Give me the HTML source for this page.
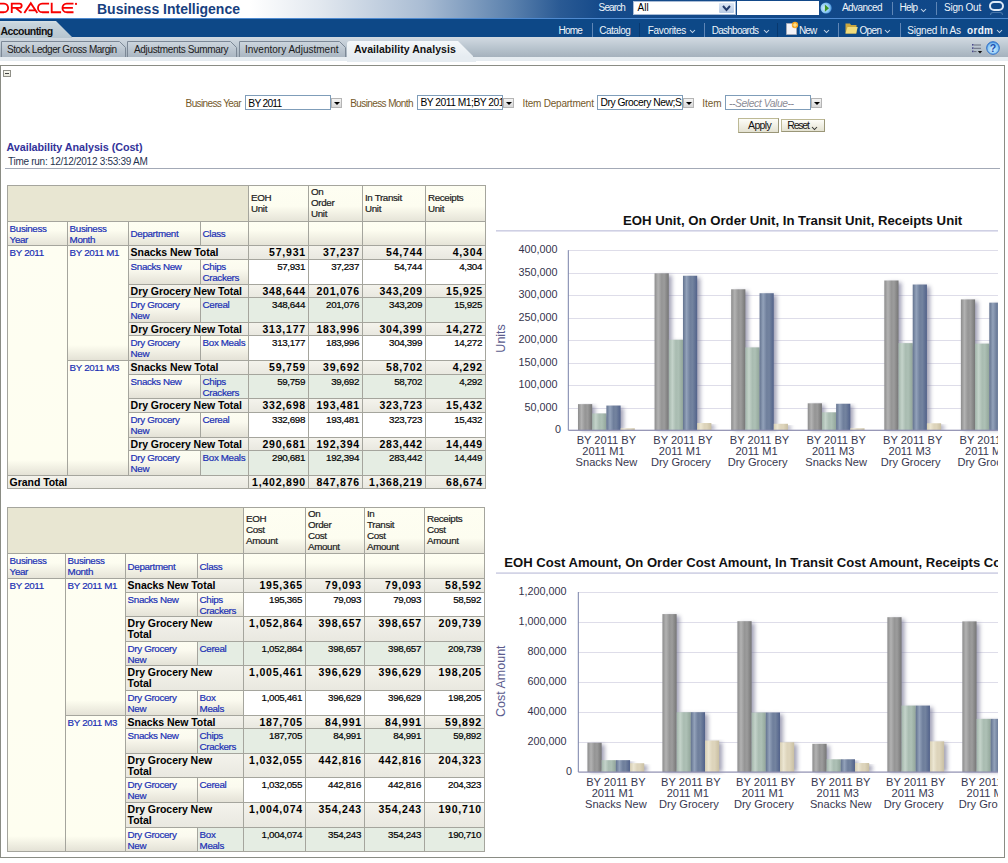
<!DOCTYPE html><html><head><meta charset="utf-8"><title>Availability Analysis</title><style>
*{box-sizing:border-box}
html,body{margin:0;padding:0}
body{width:1008px;height:863px;overflow:hidden;position:relative;background:#fff;font-family:"Liberation Sans",sans-serif;}
.a{position:absolute}
.nw{white-space:nowrap}
#top{left:0;top:0;width:1008px;height:18px;background:linear-gradient(90deg,#ffffff 0px,#ffffff 250px,#e2e8ef 320px,#a9bcd3 424px,#5c82ae 510px,#2a5a94 560px,#154a8a 600px,#0f4788 1008px)}
#blueline{left:0;top:18px;width:1008px;height:1px;background:#4f8ad0}
#nav{left:0;top:19px;width:1008px;height:18px;background:#0d4887}
#tabbar{left:0;top:37px;width:1008px;height:20px;background:linear-gradient(#d2dae2,#b6c2cc 60%,#a5b1bd)}
#strip{left:0;top:57px;width:1008px;height:4px;background:#e6ecf1}
.sep{width:1px;background:#5f86b6}
#content{left:0;top:65px;width:1005px;height:793px;border:1px solid #8a8c84}
.inp{background:#fff;border:1px solid #7f9db9;overflow:hidden;white-space:nowrap}
.dd{background:linear-gradient(#f4f4f4,#d8d8d8);border:1px solid #b5b5b5}
.dd:after{content:"";position:absolute;left:2px;top:3px;border-left:3px solid transparent;border-right:3px solid transparent;border-top:3px solid #000}
.btn{border:1px solid #bdb995;border-right-color:#9a9678;border-bottom-color:#9a9678;background:linear-gradient(#fdfdf8,#e4e2d2)}
.tb{background:#a5a59d}
.c{position:absolute;overflow:hidden;font-size:9.8px;line-height:11px;letter-spacing:-0.35px;white-space:nowrap;-webkit-text-stroke:0.2px currentColor}
.tt,.nt{-webkit-text-stroke:0}
.hb{background:#e8e6d2}
.hc{background:linear-gradient(#fefef2 0,#fdfdf0 calc(100% - 15px),#e6e4d8 100%);color:#1c1c1c;padding:0 2px;display:flex;align-items:center}
.hl{background:linear-gradient(#fefef2 0,#fdfdf0 calc(100% - 15px),#e6e4d8 100%);color:#1a30b4;padding:0 1px 0 1.6px;display:flex;align-items:center}
.rl{background:linear-gradient(#fefef2 0,#fefef0 calc(100% - 15px),#e4e2d6 100%);color:#1a30b4;padding:1px 1px 0 1.6px}
.tt{background:linear-gradient(#f4f3ec,#e9e8e0);color:#000;font-weight:bold;font-size:10.5px;letter-spacing:-0.05px;padding:1px 1px 0 1.6px}
.dl{background:linear-gradient(#fdfdf1 0,#fbfaef calc(100% - 15px),#e4e2d7 100%);color:#1a30b4;padding:1px 1px 0 1.6px}
.dg{background:#e5ede3;color:#1a30b4;padding:1px 1px 0 1.6px}
.nt{background:linear-gradient(#f4f3ec,#e9e8e0);color:#000;font-weight:bold;font-size:10.5px;letter-spacing:0.8px;text-align:right;padding:1px 2px 0}
.nd{background:#fff;color:#000;text-align:right;padding:1px 3px 0}
.ng{background:#e5ede3;color:#000;text-align:right;padding:1px 3px 0}
</style></head><body>
<div id="top" class="a"></div><div id="blueline" class="a"></div><div id="nav" class="a"></div>
<svg class="a" style="left:0;top:0" width="80" height="16"><g fill="none" stroke="#f80000" stroke-width="1.85"><path d="M-6 3.55H4A4.33 4.33 0 0 1 4 12.2H-6"/><path d="M11.75 13V3.55H19.5A2.17 2.17 0 0 1 19.5 7.9H11.75M15.6 7.9L21.6 12.7"/><path d="M24.3 13L30.8 3.2L37.3 13M28.6 10.3H35.6"/><path d="M49.1 3.55H42.1A4.33 4.33 0 0 0 42.1 12.2H49.1"/><path d="M51.7 2.75V12.2H61.1"/><path d="M73.5 3.55H66.6A4.33 4.33 0 0 0 66.6 12.2H73.5M62.6 7.9H72.9"/></g><circle cx="76" cy="3.9" r="1.1" fill="#f80000"/></svg>
<div class="a nw" style="left:97px;top:0.67px;font-size:14px;line-height:17px;font-weight:bold;font-style:normal;color:#183f80;letter-spacing:-0.009px;">Business Intelligence</div>
<div class="a nw" style="left:598.6px;top:1.70px;font-size:10px;line-height:12px;font-weight:normal;font-style:normal;color:#eef4fa;letter-spacing:-0.877px;">Search</div>
<div class="a" style="left:633px;top:1px;width:103px;height:14px;background:#fff;border:1px solid #a9bcd6"></div>
<div class="a nw" style="left:637.5px;top:1.70px;font-size:10px;line-height:12px;font-weight:normal;font-style:normal;color:#000;">All</div>
<div class="a" style="left:719px;top:3px;width:15px;height:10px;background:linear-gradient(#dde7f5,#b8cbe6);border-radius:1px"></div>
<svg class="a" style="left:722px;top:5px" width="9" height="7"><path d="M1 1 L4.5 5 L8 1" stroke="#243c6c" stroke-width="2" fill="none"/></svg>
<div class="a" style="left:737px;top:1px;width:82px;height:14px;background:#fff"></div>
<svg class="a" style="left:820px;top:2px" width="13" height="13"><defs><radialGradient id="gog" cx="0.4" cy="0.5" r="0.6"><stop offset="0" stop-color="#e0f4ff"/><stop offset="0.65" stop-color="#8fcaf5"/><stop offset="1" stop-color="#3f8ad6"/></radialGradient></defs><circle cx="6.1" cy="6" r="5.6" fill="url(#gog)"/><path d="M4.9 2.4 L9 6.2 L4.9 9.8Z" fill="#3d9628"/></svg>
<div class="a nw" style="left:842px;top:1.70px;font-size:10px;line-height:12px;font-weight:normal;font-style:normal;color:#eef4fa;letter-spacing:-0.555px;">Advanced</div>
<div class="a sep" style="left:892px;top:2px;height:13px"></div>
<div class="a nw" style="left:899.5px;top:1.70px;font-size:10px;line-height:12px;font-weight:normal;font-style:normal;color:#eef4fa;letter-spacing:-0.693px;">Help</div>
<svg class="a" style="left:920px;top:8px" width="7" height="5"><path d="M1 1 L3.5 3.5 L6 1" stroke="#c9d8ea" stroke-width="1.05" fill="none"/></svg>
<div class="a sep" style="left:936px;top:2px;height:13px"></div>
<div class="a nw" style="left:944px;top:1.70px;font-size:10px;line-height:12px;font-weight:normal;font-style:normal;color:#eef4fa;letter-spacing:-0.246px;">Sign Out</div>
<div class="a" style="left:989px;top:1px;width:15px;height:10px;border:2px solid #dde9f7;border-radius:5px"></div>
<div class="a" style="left:990px;top:12px;width:13px;height:3px;border:1.5px solid rgba(200,220,245,0.3);border-bottom:0;border-radius:5px 5px 0 0"></div>
<div class="a nw" style="left:558.5px;top:24.99px;font-size:10px;line-height:12px;font-weight:normal;font-style:normal;color:#eef4fa;letter-spacing:-0.812px;">Home</div>
<div class="a sep" style="left:592px;top:23px;height:14px"></div>
<div class="a" style="left:639px;top:23px;width:1px;height:14px;background:#08386e"></div>
<div class="a" style="left:777px;top:23px;width:1px;height:14px;background:#08386e"></div>
<div class="a nw" style="left:599.2px;top:24.99px;font-size:10px;line-height:12px;font-weight:normal;font-style:normal;color:#eef4fa;letter-spacing:-0.461px;">Catalog</div>
<div class="a nw" style="left:647.7px;top:24.99px;font-size:10px;line-height:12px;font-weight:normal;font-style:normal;color:#eef4fa;letter-spacing:-0.316px;">Favorites</div>
<svg class="a" style="left:689px;top:29px" width="7" height="5"><path d="M1 1 L3.5 3.5 L6 1" stroke="#c9d8ea" stroke-width="1.05" fill="none"/></svg>
<div class="a sep" style="left:704px;top:23px;height:14px"></div>
<div class="a nw" style="left:711.7px;top:24.99px;font-size:10px;line-height:12px;font-weight:normal;font-style:normal;color:#eef4fa;letter-spacing:-0.736px;">Dashboards</div>
<svg class="a" style="left:763px;top:29px" width="7" height="5"><path d="M1 1 L3.5 3.5 L6 1" stroke="#c9d8ea" stroke-width="1.05" fill="none"/></svg>
<svg class="a" style="left:785px;top:21px" width="14" height="15"><path d="M1.5 2.5 H8 L11.5 6 V13.5 H1.5Z" fill="#f4f4f8" stroke="#a0a8b8" stroke-width="1"/><circle cx="10" cy="4" r="3.2" fill="#f5a623"/><path d="M10 1.8V6.2M7.8 4H12.2" stroke="#fff2b0" stroke-width="1"/></svg>
<div class="a nw" style="left:799px;top:24.99px;font-size:10px;line-height:12px;font-weight:normal;font-style:normal;color:#eef4fa;letter-spacing:-0.883px;">New</div>
<svg class="a" style="left:823px;top:29px" width="7" height="5"><path d="M1 1 L3.5 3.5 L6 1" stroke="#c9d8ea" stroke-width="1.05" fill="none"/></svg>
<div class="a sep" style="left:838px;top:23px;height:14px"></div>
<svg class="a" style="left:845px;top:23px" width="13" height="11"><path d="M0.5 0.5 H5 L6 2 H11.5 V10.5 H0.5Z" fill="#c9a640"/><path d="M0.5 10.5 L2.5 4 H12.8 L11 10.5Z" fill="#f1dc7c"/></svg>
<div class="a nw" style="left:859.4px;top:24.99px;font-size:10px;line-height:12px;font-weight:normal;font-style:normal;color:#eef4fa;letter-spacing:-0.623px;">Open</div>
<svg class="a" style="left:884px;top:29px" width="7" height="5"><path d="M1 1 L3.5 3.5 L6 1" stroke="#c9d8ea" stroke-width="1.05" fill="none"/></svg>
<div class="a sep" style="left:900px;top:23px;height:14px"></div>
<div class="a nw" style="left:907.3px;top:24.99px;font-size:10px;line-height:12px;font-weight:normal;font-style:normal;color:#eef4fa;letter-spacing:-0.223px;">Signed In As</div>
<div class="a nw" style="left:967px;top:24.99px;font-size:10px;line-height:12px;font-weight:bold;font-style:normal;color:#eef4fa;letter-spacing:0.333px;">ordm</div>
<svg class="a" style="left:996px;top:29px" width="7" height="5"><path d="M1 1 L3.5 3.5 L6 1" stroke="#c9d8ea" stroke-width="1.05" fill="none"/></svg>
<div id="tabbar" class="a"></div><div id="strip" class="a"></div>
<svg class="a" style="left:0;top:21px" width="80" height="17"><defs><linearGradient id="acg" x1="0" y1="0" x2="0" y2="1"><stop offset="0" stop-color="#d6e0e6"/><stop offset="0.15" stop-color="#c8d5dd"/><stop offset="1" stop-color="#b6c5d0"/></linearGradient></defs><path d="M0 0 H56 L72 16 V17 H0Z" fill="url(#acg)"/></svg>
<div class="a nw" style="left:0.5px;top:25.03px;font-size:10.5px;line-height:13px;font-weight:bold;font-style:normal;color:#111;letter-spacing:-0.556px;">Accounting</div>
<svg class="a" style="left:1px;top:41px" width="126" height="16"><defs><linearGradient id="stg1" x1="0" y1="0" x2="0" y2="1"><stop offset="0" stop-color="#cdd6de"/><stop offset="1" stop-color="#aab6c2"/></linearGradient></defs><path d="M0.5 16 V0.5 H118.5 L124.5 6.5 V16" fill="url(#stg1)" stroke="#7c8896" stroke-width="1"/></svg>
<div class="a nw" style="left:7px;top:43.70px;font-size:10px;line-height:12px;font-weight:normal;font-style:normal;color:#1a1a1a;letter-spacing:-0.488px;">Stock Ledger Gross Margin</div>
<svg class="a" style="left:127px;top:41px" width="111" height="16"><defs><linearGradient id="stg127" x1="0" y1="0" x2="0" y2="1"><stop offset="0" stop-color="#cdd6de"/><stop offset="1" stop-color="#aab6c2"/></linearGradient></defs><path d="M0.5 16 V0.5 H103.5 L109.5 6.5 V16" fill="url(#stg127)" stroke="#7c8896" stroke-width="1"/></svg>
<div class="a nw" style="left:134px;top:43.70px;font-size:10px;line-height:12px;font-weight:normal;font-style:normal;color:#1a1a1a;letter-spacing:-0.339px;">Adjustments Summary</div>
<svg class="a" style="left:239px;top:41px" width="108" height="16"><defs><linearGradient id="stg239" x1="0" y1="0" x2="0" y2="1"><stop offset="0" stop-color="#cdd6de"/><stop offset="1" stop-color="#aab6c2"/></linearGradient></defs><path d="M0.5 16 V0.5 H100.5 L106.5 6.5 V16" fill="url(#stg239)" stroke="#7c8896" stroke-width="1"/></svg>
<div class="a nw" style="left:245px;top:43.70px;font-size:10px;line-height:12px;font-weight:normal;font-style:normal;color:#1a1a1a;letter-spacing:0.006px;">Inventory Adjustment</div>
<svg class="a" style="left:347px;top:41px" width="129" height="21"><defs><linearGradient id="atg" x1="0" y1="0" x2="0" y2="1"><stop offset="0" stop-color="#f5f8fa"/><stop offset="0.75" stop-color="#e6ecf1"/><stop offset="1" stop-color="#e6ecf1"/></linearGradient></defs><path d="M0 21 V3 Q0 0 3 0 H111 L126 15 V16 H129 V21Z" fill="url(#atg)"/></svg>
<div class="a nw" style="left:354px;top:43.03px;font-size:10.5px;line-height:13px;font-weight:bold;font-style:normal;color:#111;letter-spacing:0.049px;">Availability Analysis</div>
<svg class="a" style="left:970px;top:42px" width="14" height="13"><g fill="#4a4a8a"><rect x="2" y="2" width="1.6" height="1.6"/><rect x="2" y="5.3" width="1.6" height="1.6"/><rect x="2" y="8.6" width="1.6" height="1.6"/></g><g stroke="#6a7080" stroke-width="1"><path d="M4 3H11M4 6.3H11M4 9.6H6.5"/></g><path d="M7.8 9 H12.2 L10 11.6Z" fill="#111"/></svg>
<svg class="a" style="left:986px;top:41px" width="15" height="15"><defs><radialGradient id="hg" cx="0.5" cy="0.6" r="0.6"><stop offset="0" stop-color="#d8f0ff"/><stop offset="0.7" stop-color="#8cc8f4"/><stop offset="1" stop-color="#3a86d8"/></radialGradient></defs><circle cx="7" cy="7" r="6.3" fill="url(#hg)" stroke="#2a6cc8" stroke-width="1"/><text x="7" y="11" font-size="10.5" font-weight="bold" text-anchor="middle" fill="#1c4fb0" font-family="Liberation Sans">?</text></svg>
<div id="content" class="a"></div>
<div class="a" style="left:3px;top:70px;width:8px;height:7px;border:1px solid #909088;background:linear-gradient(#fafaf0,#e8e8dc)"><div class="a" style="left:1px;top:2px;width:4px;height:1px;background:#444"></div></div>
<div class="a nw" style="left:185.6px;top:98.00px;font-size:10px;line-height:12px;font-weight:normal;font-style:normal;color:#75592a;letter-spacing:-0.616px;">Business Year</div>
<div class="a inp" style="left:245px;top:95px;width:86px;height:15px"></div>
<div class="a nw" style="left:248.3px;top:97.90px;font-size:10.3px;line-height:12px;font-weight:normal;font-style:normal;color:#000;letter-spacing:-0.760px;">BY 2011</div>
<div class="a dd" style="left:331px;top:98px;width:11px;height:10px"></div>
<div class="a nw" style="left:350.3px;top:98.00px;font-size:10px;line-height:12px;font-weight:normal;font-style:normal;color:#75592a;letter-spacing:-0.612px;">Business Month</div>
<div class="a inp" style="left:417px;top:95px;width:86px;height:15px"></div>
<div class="a" style="left:418px;top:96px;width:84px;height:13px;overflow:hidden"><div class="a nw" style="left:2.5px;top:1.10px;font-size:10.3px;line-height:12px;font-weight:normal;font-style:normal;color:#000;letter-spacing:-0.515px;">BY 2011 M1;BY 2011 M3</div></div>
<div class="a dd" style="left:503px;top:98px;width:11px;height:10px"></div>
<div class="a nw" style="left:522.6px;top:98.00px;font-size:10px;line-height:12px;font-weight:normal;font-style:normal;color:#75592a;letter-spacing:-0.220px;">Item Department</div>
<div class="a inp" style="left:597px;top:95px;width:86px;height:15px"></div>
<div class="a" style="left:598px;top:96px;width:84px;height:13px;overflow:hidden"><div class="a nw" style="left:2.5px;top:1.10px;font-size:10.3px;line-height:12px;font-weight:normal;font-style:normal;color:#000;letter-spacing:-0.457px;">Dry Grocery New;Snacks</div></div>
<div class="a dd" style="left:683px;top:98px;width:11px;height:10px"></div>
<div class="a nw" style="left:702.2px;top:98.00px;font-size:10px;line-height:12px;font-weight:normal;font-style:normal;color:#75592a;letter-spacing:-0.051px;">Item</div>
<div class="a inp" style="left:725px;top:95px;width:86px;height:15px"></div>
<div class="a nw" style="left:729px;top:97.90px;font-size:10.3px;line-height:12px;font-weight:normal;font-style:italic;color:#8c8c96;letter-spacing:-0.410px;">--Select Value--</div>
<div class="a dd" style="left:811px;top:98px;width:11px;height:10px"></div>
<div class="a btn" style="left:738px;top:118px;width:41px;height:15px"></div>
<div class="a nw" style="left:748px;top:119.03px;font-size:10.5px;line-height:13px;font-weight:normal;font-style:normal;color:#111;letter-spacing:-0.616px;">Apply</div>
<div class="a btn" style="left:781px;top:119px;width:44px;height:13px"></div>
<div class="a nw" style="left:787.3px;top:119.03px;font-size:10.5px;line-height:13px;font-weight:normal;font-style:normal;color:#111;letter-spacing:-1.209px;">Reset</div>
<svg class="a" style="left:811px;top:126px" width="7" height="5"><path d="M1 1 L3.5 3.5 L6 1" stroke="#333" stroke-width="1.05" fill="none"/></svg>
<div class="a nw" style="left:6.5px;top:140.93px;font-size:10.8px;line-height:13px;font-weight:bold;font-style:normal;color:#33339a;letter-spacing:-0.067px;">Availability Analysis (Cost)</div>
<div class="a nw" style="left:8px;top:155.50px;font-size:10px;line-height:12px;font-weight:normal;font-style:normal;color:#1f3350;letter-spacing:-0.275px;">Time run: 12/12/2012 3:53:39 AM</div>
<div class="a" style="left:5px;top:168px;width:995px;height:1px;background:#a3a9b6"></div>
<div class="a tb" style="left:7px;top:185px;width:479px;height:304px">
<div class="c hb" style="left:1px;top:1px;width:240px;height:35px;"></div>
<div class="c hc" style="left:242px;top:1px;width:59px;height:35px;padding-bottom:2px">EOH<br>Unit</div>
<div class="c hc" style="left:302px;top:1px;width:53px;height:35px;padding-bottom:2px">On<br>Order<br>Unit</div>
<div class="c hc" style="left:356px;top:1px;width:62px;height:35px;padding-bottom:2px">In Transit<br>Unit</div>
<div class="c hc" style="left:419px;top:1px;width:59px;height:35px;padding-bottom:2px">Receipts<br>Unit</div>
<div class="c hl" style="left:1px;top:37px;width:59px;height:23px;">Business<br>Year</div>
<div class="c hl" style="left:61px;top:37px;width:60px;height:23px;">Business<br>Month</div>
<div class="c hl" style="left:122px;top:37px;width:71px;height:23px;">Department</div>
<div class="c hl" style="left:194px;top:37px;width:47px;height:23px;">Class</div>
<div class="c hc" style="left:242px;top:37px;width:59px;height:23px;"></div>
<div class="c hc" style="left:302px;top:37px;width:53px;height:23px;"></div>
<div class="c hc" style="left:356px;top:37px;width:62px;height:23px;"></div>
<div class="c hc" style="left:419px;top:37px;width:59px;height:23px;"></div>
<div class="c rl" style="left:1px;top:61px;width:59px;height:229px;">BY 2011</div>
<div class="c rl" style="left:61px;top:61px;width:60px;height:114px;">BY 2011 M1</div>
<div class="c rl" style="left:61px;top:176px;width:60px;height:114px;">BY 2011 M3</div>
<div class="c tt" style="left:122px;top:61px;width:119px;height:13px;">Snacks New Total</div>
<div class="c nt" style="left:242px;top:61px;width:59px;height:13px;">57,931</div>
<div class="c nt" style="left:302px;top:61px;width:53px;height:13px;">37,237</div>
<div class="c nt" style="left:356px;top:61px;width:62px;height:13px;">54,744</div>
<div class="c nt" style="left:419px;top:61px;width:59px;height:13px;">4,304</div>
<div class="c dl" style="left:122px;top:75px;width:71px;height:24px;">Snacks New</div>
<div class="c dl" style="left:194px;top:75px;width:47px;height:24px;">Chips<br>Crackers</div>
<div class="c nd" style="left:242px;top:75px;width:59px;height:24px;">57,931</div>
<div class="c nd" style="left:302px;top:75px;width:53px;height:24px;">37,237</div>
<div class="c nd" style="left:356px;top:75px;width:62px;height:24px;">54,744</div>
<div class="c nd" style="left:419px;top:75px;width:59px;height:24px;">4,304</div>
<div class="c tt" style="left:122px;top:100px;width:119px;height:12px;">Dry Grocery New Total</div>
<div class="c nt" style="left:242px;top:100px;width:59px;height:12px;">348,644</div>
<div class="c nt" style="left:302px;top:100px;width:53px;height:12px;">201,076</div>
<div class="c nt" style="left:356px;top:100px;width:62px;height:12px;">343,209</div>
<div class="c nt" style="left:419px;top:100px;width:59px;height:12px;">15,925</div>
<div class="c dl" style="left:122px;top:113px;width:71px;height:24px;">Dry Grocery<br>New</div>
<div class="c dg" style="left:194px;top:113px;width:47px;height:24px;">Cereal</div>
<div class="c ng" style="left:242px;top:113px;width:59px;height:24px;">348,644</div>
<div class="c ng" style="left:302px;top:113px;width:53px;height:24px;">201,076</div>
<div class="c ng" style="left:356px;top:113px;width:62px;height:24px;">343,209</div>
<div class="c ng" style="left:419px;top:113px;width:59px;height:24px;">15,925</div>
<div class="c tt" style="left:122px;top:138px;width:119px;height:12px;">Dry Grocery New Total</div>
<div class="c nt" style="left:242px;top:138px;width:59px;height:12px;">313,177</div>
<div class="c nt" style="left:302px;top:138px;width:53px;height:12px;">183,996</div>
<div class="c nt" style="left:356px;top:138px;width:62px;height:12px;">304,399</div>
<div class="c nt" style="left:419px;top:138px;width:59px;height:12px;">14,272</div>
<div class="c dl" style="left:122px;top:151px;width:71px;height:24px;">Dry Grocery<br>New</div>
<div class="c dl" style="left:194px;top:151px;width:47px;height:24px;">Box Meals</div>
<div class="c nd" style="left:242px;top:151px;width:59px;height:24px;">313,177</div>
<div class="c nd" style="left:302px;top:151px;width:53px;height:24px;">183,996</div>
<div class="c nd" style="left:356px;top:151px;width:62px;height:24px;">304,399</div>
<div class="c nd" style="left:419px;top:151px;width:59px;height:24px;">14,272</div>
<div class="c tt" style="left:122px;top:176px;width:119px;height:13px;">Snacks New Total</div>
<div class="c nt" style="left:242px;top:176px;width:59px;height:13px;">59,759</div>
<div class="c nt" style="left:302px;top:176px;width:53px;height:13px;">39,692</div>
<div class="c nt" style="left:356px;top:176px;width:62px;height:13px;">58,702</div>
<div class="c nt" style="left:419px;top:176px;width:59px;height:13px;">4,292</div>
<div class="c dl" style="left:122px;top:190px;width:71px;height:23px;">Snacks New</div>
<div class="c dg" style="left:194px;top:190px;width:47px;height:23px;">Chips<br>Crackers</div>
<div class="c ng" style="left:242px;top:190px;width:59px;height:23px;">59,759</div>
<div class="c ng" style="left:302px;top:190px;width:53px;height:23px;">39,692</div>
<div class="c ng" style="left:356px;top:190px;width:62px;height:23px;">58,702</div>
<div class="c ng" style="left:419px;top:190px;width:59px;height:23px;">4,292</div>
<div class="c tt" style="left:122px;top:214px;width:119px;height:13px;">Dry Grocery New Total</div>
<div class="c nt" style="left:242px;top:214px;width:59px;height:13px;">332,698</div>
<div class="c nt" style="left:302px;top:214px;width:53px;height:13px;">193,481</div>
<div class="c nt" style="left:356px;top:214px;width:62px;height:13px;">323,723</div>
<div class="c nt" style="left:419px;top:214px;width:59px;height:13px;">15,432</div>
<div class="c dl" style="left:122px;top:228px;width:71px;height:24px;">Dry Grocery<br>New</div>
<div class="c dl" style="left:194px;top:228px;width:47px;height:24px;">Cereal</div>
<div class="c nd" style="left:242px;top:228px;width:59px;height:24px;">332,698</div>
<div class="c nd" style="left:302px;top:228px;width:53px;height:24px;">193,481</div>
<div class="c nd" style="left:356px;top:228px;width:62px;height:24px;">323,723</div>
<div class="c nd" style="left:419px;top:228px;width:59px;height:24px;">15,432</div>
<div class="c tt" style="left:122px;top:253px;width:119px;height:12px;">Dry Grocery New Total</div>
<div class="c nt" style="left:242px;top:253px;width:59px;height:12px;">290,681</div>
<div class="c nt" style="left:302px;top:253px;width:53px;height:12px;">192,394</div>
<div class="c nt" style="left:356px;top:253px;width:62px;height:12px;">283,442</div>
<div class="c nt" style="left:419px;top:253px;width:59px;height:12px;">14,449</div>
<div class="c dl" style="left:122px;top:266px;width:71px;height:24px;">Dry Grocery<br>New</div>
<div class="c dg" style="left:194px;top:266px;width:47px;height:24px;">Box Meals</div>
<div class="c ng" style="left:242px;top:266px;width:59px;height:24px;">290,681</div>
<div class="c ng" style="left:302px;top:266px;width:53px;height:24px;">192,394</div>
<div class="c ng" style="left:356px;top:266px;width:62px;height:24px;">283,442</div>
<div class="c ng" style="left:419px;top:266px;width:59px;height:24px;">14,449</div>
<div class="c tt" style="left:1px;top:291px;width:240px;height:12px;">Grand Total</div>
<div class="c nt" style="left:242px;top:291px;width:59px;height:12px;">1,402,890</div>
<div class="c nt" style="left:302px;top:291px;width:53px;height:12px;">847,876</div>
<div class="c nt" style="left:356px;top:291px;width:62px;height:12px;">1,368,219</div>
<div class="c nt" style="left:419px;top:291px;width:59px;height:12px;">68,674</div>
</div>
<div class="a tb" style="left:7px;top:507px;width:478px;height:345px">
<div class="c hb" style="left:1px;top:1px;width:235px;height:45px;"></div>
<div class="c hc" style="left:237px;top:1px;width:61px;height:45px;padding-bottom:2px">EOH<br>Cost<br>Amount</div>
<div class="c hc" style="left:299px;top:1px;width:58px;height:45px;padding-bottom:2px">On<br>Order<br>Cost<br>Amount</div>
<div class="c hc" style="left:358px;top:1px;width:59px;height:45px;padding-bottom:2px">In<br>Transit<br>Cost<br>Amount</div>
<div class="c hc" style="left:418px;top:1px;width:59px;height:45px;padding-bottom:2px">Receipts<br>Cost<br>Amount</div>
<div class="c hl" style="left:1px;top:47px;width:57px;height:24px;">Business<br>Year</div>
<div class="c hl" style="left:59px;top:47px;width:59px;height:24px;">Business<br>Month</div>
<div class="c hl" style="left:119px;top:47px;width:71px;height:24px;">Department</div>
<div class="c hl" style="left:191px;top:47px;width:45px;height:24px;">Class</div>
<div class="c hc" style="left:237px;top:47px;width:61px;height:24px;"></div>
<div class="c hc" style="left:299px;top:47px;width:58px;height:24px;"></div>
<div class="c hc" style="left:358px;top:47px;width:59px;height:24px;"></div>
<div class="c hc" style="left:418px;top:47px;width:59px;height:24px;"></div>
<div class="c rl" style="left:1px;top:72px;width:57px;height:272px;">BY 2011</div>
<div class="c rl" style="left:59px;top:72px;width:59px;height:136px;">BY 2011 M1</div>
<div class="c rl" style="left:59px;top:209px;width:59px;height:135px;">BY 2011 M3</div>
<div class="c tt" style="left:119px;top:72px;width:117px;height:13px;">Snacks New Total</div>
<div class="c nt" style="left:237px;top:72px;width:61px;height:13px;">195,365</div>
<div class="c nt" style="left:299px;top:72px;width:58px;height:13px;">79,093</div>
<div class="c nt" style="left:358px;top:72px;width:59px;height:13px;">79,093</div>
<div class="c nt" style="left:418px;top:72px;width:59px;height:13px;">58,592</div>
<div class="c dl" style="left:119px;top:86px;width:71px;height:23px;">Snacks New</div>
<div class="c dl" style="left:191px;top:86px;width:45px;height:23px;">Chips<br>Crackers</div>
<div class="c nd" style="left:237px;top:86px;width:61px;height:23px;">195,365</div>
<div class="c nd" style="left:299px;top:86px;width:58px;height:23px;">79,093</div>
<div class="c nd" style="left:358px;top:86px;width:59px;height:23px;">79,093</div>
<div class="c nd" style="left:418px;top:86px;width:59px;height:23px;">58,592</div>
<div class="c tt" style="left:119px;top:110px;width:117px;height:24px;">Dry Grocery New<br>Total</div>
<div class="c nt" style="left:237px;top:110px;width:61px;height:24px;">1,052,864</div>
<div class="c nt" style="left:299px;top:110px;width:58px;height:24px;">398,657</div>
<div class="c nt" style="left:358px;top:110px;width:59px;height:24px;">398,657</div>
<div class="c nt" style="left:418px;top:110px;width:59px;height:24px;">209,739</div>
<div class="c dl" style="left:119px;top:135px;width:71px;height:23px;">Dry Grocery<br>New</div>
<div class="c dg" style="left:191px;top:135px;width:45px;height:23px;">Cereal</div>
<div class="c ng" style="left:237px;top:135px;width:61px;height:23px;">1,052,864</div>
<div class="c ng" style="left:299px;top:135px;width:58px;height:23px;">398,657</div>
<div class="c ng" style="left:358px;top:135px;width:59px;height:23px;">398,657</div>
<div class="c ng" style="left:418px;top:135px;width:59px;height:23px;">209,739</div>
<div class="c tt" style="left:119px;top:159px;width:117px;height:24px;">Dry Grocery New<br>Total</div>
<div class="c nt" style="left:237px;top:159px;width:61px;height:24px;">1,005,461</div>
<div class="c nt" style="left:299px;top:159px;width:58px;height:24px;">396,629</div>
<div class="c nt" style="left:358px;top:159px;width:59px;height:24px;">396,629</div>
<div class="c nt" style="left:418px;top:159px;width:59px;height:24px;">198,205</div>
<div class="c dl" style="left:119px;top:184px;width:71px;height:24px;">Dry Grocery<br>New</div>
<div class="c dl" style="left:191px;top:184px;width:45px;height:24px;">Box<br>Meals</div>
<div class="c nd" style="left:237px;top:184px;width:61px;height:24px;">1,005,461</div>
<div class="c nd" style="left:299px;top:184px;width:58px;height:24px;">396,629</div>
<div class="c nd" style="left:358px;top:184px;width:59px;height:24px;">396,629</div>
<div class="c nd" style="left:418px;top:184px;width:59px;height:24px;">198,205</div>
<div class="c tt" style="left:119px;top:209px;width:117px;height:12px;">Snacks New Total</div>
<div class="c nt" style="left:237px;top:209px;width:61px;height:12px;">187,705</div>
<div class="c nt" style="left:299px;top:209px;width:58px;height:12px;">84,991</div>
<div class="c nt" style="left:358px;top:209px;width:59px;height:12px;">84,991</div>
<div class="c nt" style="left:418px;top:209px;width:59px;height:12px;">59,892</div>
<div class="c dl" style="left:119px;top:222px;width:71px;height:24px;">Snacks New</div>
<div class="c dg" style="left:191px;top:222px;width:45px;height:24px;">Chips<br>Crackers</div>
<div class="c ng" style="left:237px;top:222px;width:61px;height:24px;">187,705</div>
<div class="c ng" style="left:299px;top:222px;width:58px;height:24px;">84,991</div>
<div class="c ng" style="left:358px;top:222px;width:59px;height:24px;">84,991</div>
<div class="c ng" style="left:418px;top:222px;width:59px;height:24px;">59,892</div>
<div class="c tt" style="left:119px;top:247px;width:117px;height:23px;">Dry Grocery New<br>Total</div>
<div class="c nt" style="left:237px;top:247px;width:61px;height:23px;">1,032,055</div>
<div class="c nt" style="left:299px;top:247px;width:58px;height:23px;">442,816</div>
<div class="c nt" style="left:358px;top:247px;width:59px;height:23px;">442,816</div>
<div class="c nt" style="left:418px;top:247px;width:59px;height:23px;">204,323</div>
<div class="c dl" style="left:119px;top:271px;width:71px;height:24px;">Dry Grocery<br>New</div>
<div class="c dl" style="left:191px;top:271px;width:45px;height:24px;">Cereal</div>
<div class="c nd" style="left:237px;top:271px;width:61px;height:24px;">1,032,055</div>
<div class="c nd" style="left:299px;top:271px;width:58px;height:24px;">442,816</div>
<div class="c nd" style="left:358px;top:271px;width:59px;height:24px;">442,816</div>
<div class="c nd" style="left:418px;top:271px;width:59px;height:24px;">204,323</div>
<div class="c tt" style="left:119px;top:296px;width:117px;height:24px;">Dry Grocery New<br>Total</div>
<div class="c nt" style="left:237px;top:296px;width:61px;height:24px;">1,004,074</div>
<div class="c nt" style="left:299px;top:296px;width:58px;height:24px;">354,243</div>
<div class="c nt" style="left:358px;top:296px;width:59px;height:24px;">354,243</div>
<div class="c nt" style="left:418px;top:296px;width:59px;height:24px;">190,710</div>
<div class="c dl" style="left:119px;top:321px;width:71px;height:23px;">Dry Grocery<br>New</div>
<div class="c dg" style="left:191px;top:321px;width:45px;height:23px;">Box<br>Meals</div>
<div class="c ng" style="left:237px;top:321px;width:61px;height:23px;">1,004,074</div>
<div class="c ng" style="left:299px;top:321px;width:58px;height:23px;">354,243</div>
<div class="c ng" style="left:358px;top:321px;width:59px;height:23px;">354,243</div>
<div class="c ng" style="left:418px;top:321px;width:59px;height:23px;">190,710</div>
</div>
<svg class="a" style="left:490px;top:200px" width="508" height="290" font-family="Liberation Sans"><defs><linearGradient id="gG200" x1="0" y1="0" x2="1" y2="0"><stop offset="0" stop-color="#8c8c8c"/><stop offset="0.25" stop-color="#b2b2b2"/><stop offset="0.5" stop-color="#959595"/><stop offset="0.68" stop-color="#9c9c9c"/><stop offset="1" stop-color="#767676"/></linearGradient><linearGradient id="gN200" x1="0" y1="0" x2="1" y2="0"><stop offset="0" stop-color="#a2b5aa"/><stop offset="0.25" stop-color="#c4d3ca"/><stop offset="0.5" stop-color="#a9bcb1"/><stop offset="0.68" stop-color="#adc0b5"/><stop offset="1" stop-color="#92a69a"/></linearGradient><linearGradient id="gB200" x1="0" y1="0" x2="1" y2="0"><stop offset="0" stop-color="#63738f"/><stop offset="0.25" stop-color="#93a2ba"/><stop offset="0.5" stop-color="#6f7f9c"/><stop offset="0.68" stop-color="#73839f"/><stop offset="1" stop-color="#52628a"/></linearGradient><linearGradient id="gY200" x1="0" y1="0" x2="1" y2="0"><stop offset="0" stop-color="#d6cdb2"/><stop offset="0.25" stop-color="#ece6d2"/><stop offset="0.5" stop-color="#ddd4bb"/><stop offset="0.68" stop-color="#ddd4bb"/><stop offset="1" stop-color="#c9bfa2"/></linearGradient><filter id="sh200" x="-50%" y="-10%" width="200%" height="120%"><feGaussianBlur stdDeviation="2.2"/></filter></defs><rect x="6" y="30" width="504" height="1.6" fill="#cfd0e4"/><text x="133" y="24.7" font-size="13.2" font-weight="bold" fill="#111">EOH Unit, On Order Unit, In Transit Unit, Receipts Unit</text><text x="71.00" y="233.40" font-size="10.8" text-anchor="end" fill="#34344c">0</text><rect x="78.3" y="208" width="431.70000000000005" height="1" fill="#dedde9"/><text x="67.60" y="210.90" font-size="10.8" text-anchor="end" fill="#34344c">50,000</text><rect x="78.3" y="185" width="431.70000000000005" height="1" fill="#dedde9"/><text x="67.60" y="188.40" font-size="10.8" text-anchor="end" fill="#34344c">100,000</text><rect x="78.3" y="163" width="431.70000000000005" height="1" fill="#dedde9"/><text x="67.60" y="165.90" font-size="10.8" text-anchor="end" fill="#34344c">150,000</text><rect x="78.3" y="140" width="431.70000000000005" height="1" fill="#dedde9"/><text x="67.60" y="143.40" font-size="10.8" text-anchor="end" fill="#34344c">200,000</text><rect x="78.3" y="118" width="431.70000000000005" height="1" fill="#dedde9"/><text x="67.60" y="120.90" font-size="10.8" text-anchor="end" fill="#34344c">250,000</text><rect x="78.3" y="95" width="431.70000000000005" height="1" fill="#dedde9"/><text x="67.60" y="98.40" font-size="10.8" text-anchor="end" fill="#34344c">300,000</text><rect x="78.3" y="73" width="431.70000000000005" height="1" fill="#dedde9"/><text x="67.60" y="75.90" font-size="10.8" text-anchor="end" fill="#34344c">350,000</text><rect x="78.3" y="50" width="431.70000000000005" height="1" fill="#dedde9"/><text x="67.60" y="53.40" font-size="10.8" text-anchor="end" fill="#34344c">400,000</text><rect x="77.8" y="50.2" width="1" height="180.0" fill="#7880a8"/><text transform="translate(14.6,138.4) rotate(-90)" font-size="12.5" text-anchor="middle" fill="#5c5c8e">Units</text><rect x="91.00" y="206.13" width="14.2" height="24.07" fill="#7a7a98" opacity="0.7" filter="url(#sh200)"/><rect x="105.20" y="215.44" width="14.2" height="14.76" fill="#7a7a98" opacity="0.7" filter="url(#sh200)"/><rect x="119.40" y="207.57" width="14.2" height="22.63" fill="#7a7a98" opacity="0.7" filter="url(#sh200)"/><rect x="133.60" y="230.26" width="14.2" height="0.00" fill="#7a7a98" opacity="0.7" filter="url(#sh200)"/><rect x="88.00" y="204.13" width="14.2" height="26.07" fill="url(#gG200)"/><rect x="102.20" y="213.44" width="14.2" height="16.76" fill="url(#gN200)"/><rect x="116.40" y="205.57" width="14.2" height="24.63" fill="url(#gB200)"/><rect x="130.60" y="228.26" width="14.2" height="1.94" fill="url(#gY200)"/><text x="116.40" y="244.2" font-size="11.1" text-anchor="middle" fill="#383850">BY 2011 BY</text><text x="113.40" y="254.9" font-size="11.1" text-anchor="middle" fill="#383850">2011 M1</text><text x="116.40" y="266" font-size="11.1" text-anchor="middle" fill="#383850">Snacks New</text><rect x="167.58" y="75.31" width="14.2" height="154.89" fill="#7a7a98" opacity="0.7" filter="url(#sh200)"/><rect x="181.78" y="141.72" width="14.2" height="88.48" fill="#7a7a98" opacity="0.7" filter="url(#sh200)"/><rect x="195.98" y="77.76" width="14.2" height="152.44" fill="#7a7a98" opacity="0.7" filter="url(#sh200)"/><rect x="210.18" y="225.03" width="14.2" height="5.17" fill="#7a7a98" opacity="0.7" filter="url(#sh200)"/><rect x="164.58" y="73.31" width="14.2" height="156.89" fill="url(#gG200)"/><rect x="178.78" y="139.72" width="14.2" height="90.48" fill="url(#gN200)"/><rect x="192.98" y="75.76" width="14.2" height="154.44" fill="url(#gB200)"/><rect x="207.18" y="223.03" width="14.2" height="7.17" fill="url(#gY200)"/><text x="192.98" y="244.2" font-size="11.1" text-anchor="middle" fill="#383850">BY 2011 BY</text><text x="189.98" y="254.9" font-size="11.1" text-anchor="middle" fill="#383850">2011 M1</text><text x="190.98" y="266" font-size="11.1" text-anchor="middle" fill="#383850">Dry Grocery</text><rect x="244.16" y="91.27" width="14.2" height="138.93" fill="#7a7a98" opacity="0.7" filter="url(#sh200)"/><rect x="258.36" y="149.40" width="14.2" height="80.80" fill="#7a7a98" opacity="0.7" filter="url(#sh200)"/><rect x="272.56" y="95.22" width="14.2" height="134.98" fill="#7a7a98" opacity="0.7" filter="url(#sh200)"/><rect x="286.76" y="225.78" width="14.2" height="4.42" fill="#7a7a98" opacity="0.7" filter="url(#sh200)"/><rect x="241.16" y="89.27" width="14.2" height="140.93" fill="url(#gG200)"/><rect x="255.36" y="147.40" width="14.2" height="82.80" fill="url(#gN200)"/><rect x="269.56" y="93.22" width="14.2" height="136.98" fill="url(#gB200)"/><rect x="283.76" y="223.78" width="14.2" height="6.42" fill="url(#gY200)"/><text x="269.56" y="244.2" font-size="11.1" text-anchor="middle" fill="#383850">BY 2011 BY</text><text x="266.56" y="254.9" font-size="11.1" text-anchor="middle" fill="#383850">2011 M1</text><text x="267.56" y="266" font-size="11.1" text-anchor="middle" fill="#383850">Dry Grocery</text><rect x="320.74" y="205.31" width="14.2" height="24.89" fill="#7a7a98" opacity="0.7" filter="url(#sh200)"/><rect x="334.94" y="214.34" width="14.2" height="15.86" fill="#7a7a98" opacity="0.7" filter="url(#sh200)"/><rect x="349.14" y="205.78" width="14.2" height="24.42" fill="#7a7a98" opacity="0.7" filter="url(#sh200)"/><rect x="363.34" y="230.27" width="14.2" height="0.00" fill="#7a7a98" opacity="0.7" filter="url(#sh200)"/><rect x="317.74" y="203.31" width="14.2" height="26.89" fill="url(#gG200)"/><rect x="331.94" y="212.34" width="14.2" height="17.86" fill="url(#gN200)"/><rect x="346.14" y="203.78" width="14.2" height="26.42" fill="url(#gB200)"/><rect x="360.34" y="228.27" width="14.2" height="1.93" fill="url(#gY200)"/><text x="346.14" y="244.2" font-size="11.1" text-anchor="middle" fill="#383850">BY 2011 BY</text><text x="343.14" y="254.9" font-size="11.1" text-anchor="middle" fill="#383850">2011 M3</text><text x="346.14" y="266" font-size="11.1" text-anchor="middle" fill="#383850">Snacks New</text><rect x="397.32" y="82.49" width="14.2" height="147.71" fill="#7a7a98" opacity="0.7" filter="url(#sh200)"/><rect x="411.52" y="145.13" width="14.2" height="85.07" fill="#7a7a98" opacity="0.7" filter="url(#sh200)"/><rect x="425.72" y="86.52" width="14.2" height="143.68" fill="#7a7a98" opacity="0.7" filter="url(#sh200)"/><rect x="439.92" y="225.26" width="14.2" height="4.94" fill="#7a7a98" opacity="0.7" filter="url(#sh200)"/><rect x="394.32" y="80.49" width="14.2" height="149.71" fill="url(#gG200)"/><rect x="408.52" y="143.13" width="14.2" height="87.07" fill="url(#gN200)"/><rect x="422.72" y="84.52" width="14.2" height="145.68" fill="url(#gB200)"/><rect x="436.92" y="223.26" width="14.2" height="6.94" fill="url(#gY200)"/><text x="422.72" y="244.2" font-size="11.1" text-anchor="middle" fill="#383850">BY 2011 BY</text><text x="419.72" y="254.9" font-size="11.1" text-anchor="middle" fill="#383850">2011 M3</text><text x="420.72" y="266" font-size="11.1" text-anchor="middle" fill="#383850">Dry Grocery</text><rect x="473.90" y="101.39" width="14.2" height="128.81" fill="#7a7a98" opacity="0.7" filter="url(#sh200)"/><rect x="488.10" y="145.62" width="14.2" height="84.58" fill="#7a7a98" opacity="0.7" filter="url(#sh200)"/><rect x="502.30" y="104.65" width="14.2" height="125.55" fill="#7a7a98" opacity="0.7" filter="url(#sh200)"/><rect x="516.50" y="225.70" width="14.2" height="4.50" fill="#7a7a98" opacity="0.7" filter="url(#sh200)"/><rect x="470.90" y="99.39" width="14.2" height="130.81" fill="url(#gG200)"/><rect x="485.10" y="143.62" width="14.2" height="86.58" fill="url(#gN200)"/><rect x="499.30" y="102.65" width="14.2" height="127.55" fill="url(#gB200)"/><rect x="513.50" y="223.70" width="14.2" height="6.50" fill="url(#gY200)"/><text x="499.30" y="244.2" font-size="11.1" text-anchor="middle" fill="#383850">BY 2011 BY</text><text x="496.30" y="254.9" font-size="11.1" text-anchor="middle" fill="#383850">2011 M3</text><text x="497.30" y="266" font-size="11.1" text-anchor="middle" fill="#383850">Dry Grocery</text><rect x="78.3" y="229.7" width="431.70000000000005" height="1.2" fill="#8d8db0"/></svg>
<svg class="a" style="left:490px;top:540px" width="508" height="290" font-family="Liberation Sans"><defs><linearGradient id="gG540" x1="0" y1="0" x2="1" y2="0"><stop offset="0" stop-color="#8c8c8c"/><stop offset="0.25" stop-color="#b2b2b2"/><stop offset="0.5" stop-color="#959595"/><stop offset="0.68" stop-color="#9c9c9c"/><stop offset="1" stop-color="#767676"/></linearGradient><linearGradient id="gN540" x1="0" y1="0" x2="1" y2="0"><stop offset="0" stop-color="#a2b5aa"/><stop offset="0.25" stop-color="#c4d3ca"/><stop offset="0.5" stop-color="#a9bcb1"/><stop offset="0.68" stop-color="#adc0b5"/><stop offset="1" stop-color="#92a69a"/></linearGradient><linearGradient id="gB540" x1="0" y1="0" x2="1" y2="0"><stop offset="0" stop-color="#63738f"/><stop offset="0.25" stop-color="#93a2ba"/><stop offset="0.5" stop-color="#6f7f9c"/><stop offset="0.68" stop-color="#73839f"/><stop offset="1" stop-color="#52628a"/></linearGradient><linearGradient id="gY540" x1="0" y1="0" x2="1" y2="0"><stop offset="0" stop-color="#d6cdb2"/><stop offset="0.25" stop-color="#ece6d2"/><stop offset="0.5" stop-color="#ddd4bb"/><stop offset="0.68" stop-color="#ddd4bb"/><stop offset="1" stop-color="#c9bfa2"/></linearGradient><filter id="sh540" x="-50%" y="-10%" width="200%" height="120%"><feGaussianBlur stdDeviation="2.2"/></filter></defs><rect x="6" y="32.3" width="504" height="1.6" fill="#cfd0e4"/><text x="14.3" y="27" font-size="13.08" font-weight="bold" fill="#111">EOH Cost Amount, On Order Cost Amount, In Transit Cost Amount, Receipts Cost Amount</text><text x="82.10" y="235.20" font-size="10.8" text-anchor="end" fill="#34344c">0</text><rect x="88.3" y="202" width="421.70000000000005" height="1" fill="#dedde9"/><text x="76.50" y="205.20" font-size="10.8" text-anchor="end" fill="#34344c">200,000</text><rect x="88.3" y="172" width="421.70000000000005" height="1" fill="#dedde9"/><text x="76.50" y="175.20" font-size="10.8" text-anchor="end" fill="#34344c">400,000</text><rect x="88.3" y="142" width="421.70000000000005" height="1" fill="#dedde9"/><text x="76.50" y="145.20" font-size="10.8" text-anchor="end" fill="#34344c">600,000</text><rect x="88.3" y="112" width="421.70000000000005" height="1" fill="#dedde9"/><text x="76.50" y="115.20" font-size="10.8" text-anchor="end" fill="#34344c">800,000</text><rect x="88.3" y="82" width="421.70000000000005" height="1" fill="#dedde9"/><text x="76.50" y="85.20" font-size="10.8" text-anchor="end" fill="#34344c">1,000,000</text><rect x="88.3" y="52" width="421.70000000000005" height="1" fill="#dedde9"/><text x="76.50" y="55.20" font-size="10.8" text-anchor="end" fill="#34344c">1,200,000</text><rect x="87.8" y="52" width="1" height="180" fill="#7880a8"/><text transform="translate(14.7,141.2) rotate(-90)" font-size="12.5" text-anchor="middle" fill="#5c5c8e">Cost Amount</text><rect x="100.45" y="204.70" width="14.2" height="27.30" fill="#7a7a98" opacity="0.7" filter="url(#sh540)"/><rect x="114.65" y="222.14" width="14.2" height="9.86" fill="#7a7a98" opacity="0.7" filter="url(#sh540)"/><rect x="128.85" y="222.14" width="14.2" height="9.86" fill="#7a7a98" opacity="0.7" filter="url(#sh540)"/><rect x="143.05" y="225.21" width="14.2" height="6.79" fill="#7a7a98" opacity="0.7" filter="url(#sh540)"/><rect x="97.45" y="202.70" width="14.2" height="29.30" fill="url(#gG540)"/><rect x="111.65" y="220.14" width="14.2" height="11.86" fill="url(#gN540)"/><rect x="125.85" y="220.14" width="14.2" height="11.86" fill="url(#gB540)"/><rect x="140.05" y="223.21" width="14.2" height="8.79" fill="url(#gY540)"/><text x="125.85" y="246" font-size="11.1" text-anchor="middle" fill="#383850">BY 2011 BY</text><text x="122.85" y="256.5" font-size="11.1" text-anchor="middle" fill="#383850">2011 M1</text><text x="125.85" y="267.5" font-size="11.1" text-anchor="middle" fill="#383850">Snacks New</text><rect x="175.43" y="76.07" width="14.2" height="155.93" fill="#7a7a98" opacity="0.7" filter="url(#sh540)"/><rect x="189.63" y="174.20" width="14.2" height="57.80" fill="#7a7a98" opacity="0.7" filter="url(#sh540)"/><rect x="203.83" y="174.20" width="14.2" height="57.80" fill="#7a7a98" opacity="0.7" filter="url(#sh540)"/><rect x="218.03" y="202.54" width="14.2" height="29.46" fill="#7a7a98" opacity="0.7" filter="url(#sh540)"/><rect x="172.43" y="74.07" width="14.2" height="157.93" fill="url(#gG540)"/><rect x="186.63" y="172.20" width="14.2" height="59.80" fill="url(#gN540)"/><rect x="200.83" y="172.20" width="14.2" height="59.80" fill="url(#gB540)"/><rect x="215.03" y="200.54" width="14.2" height="31.46" fill="url(#gY540)"/><text x="200.83" y="246" font-size="11.1" text-anchor="middle" fill="#383850">BY 2011 BY</text><text x="197.83" y="256.5" font-size="11.1" text-anchor="middle" fill="#383850">2011 M1</text><text x="198.83" y="267.5" font-size="11.1" text-anchor="middle" fill="#383850">Dry Grocery</text><rect x="250.41" y="83.18" width="14.2" height="148.82" fill="#7a7a98" opacity="0.7" filter="url(#sh540)"/><rect x="264.61" y="174.51" width="14.2" height="57.49" fill="#7a7a98" opacity="0.7" filter="url(#sh540)"/><rect x="278.81" y="174.51" width="14.2" height="57.49" fill="#7a7a98" opacity="0.7" filter="url(#sh540)"/><rect x="293.01" y="204.27" width="14.2" height="27.73" fill="#7a7a98" opacity="0.7" filter="url(#sh540)"/><rect x="247.41" y="81.18" width="14.2" height="150.82" fill="url(#gG540)"/><rect x="261.61" y="172.51" width="14.2" height="59.49" fill="url(#gN540)"/><rect x="275.81" y="172.51" width="14.2" height="59.49" fill="url(#gB540)"/><rect x="290.01" y="202.27" width="14.2" height="29.73" fill="url(#gY540)"/><text x="275.81" y="246" font-size="11.1" text-anchor="middle" fill="#383850">BY 2011 BY</text><text x="272.81" y="256.5" font-size="11.1" text-anchor="middle" fill="#383850">2011 M1</text><text x="273.81" y="267.5" font-size="11.1" text-anchor="middle" fill="#383850">Dry Grocery</text><rect x="325.39" y="205.84" width="14.2" height="26.16" fill="#7a7a98" opacity="0.7" filter="url(#sh540)"/><rect x="339.59" y="221.25" width="14.2" height="10.75" fill="#7a7a98" opacity="0.7" filter="url(#sh540)"/><rect x="353.79" y="221.25" width="14.2" height="10.75" fill="#7a7a98" opacity="0.7" filter="url(#sh540)"/><rect x="367.99" y="225.02" width="14.2" height="6.98" fill="#7a7a98" opacity="0.7" filter="url(#sh540)"/><rect x="322.39" y="203.84" width="14.2" height="28.16" fill="url(#gG540)"/><rect x="336.59" y="219.25" width="14.2" height="12.75" fill="url(#gN540)"/><rect x="350.79" y="219.25" width="14.2" height="12.75" fill="url(#gB540)"/><rect x="364.99" y="223.02" width="14.2" height="8.98" fill="url(#gY540)"/><text x="350.79" y="246" font-size="11.1" text-anchor="middle" fill="#383850">BY 2011 BY</text><text x="347.79" y="256.5" font-size="11.1" text-anchor="middle" fill="#383850">2011 M3</text><text x="350.79" y="267.5" font-size="11.1" text-anchor="middle" fill="#383850">Snacks New</text><rect x="400.37" y="79.19" width="14.2" height="152.81" fill="#7a7a98" opacity="0.7" filter="url(#sh540)"/><rect x="414.57" y="167.58" width="14.2" height="64.42" fill="#7a7a98" opacity="0.7" filter="url(#sh540)"/><rect x="428.77" y="167.58" width="14.2" height="64.42" fill="#7a7a98" opacity="0.7" filter="url(#sh540)"/><rect x="442.97" y="203.35" width="14.2" height="28.65" fill="#7a7a98" opacity="0.7" filter="url(#sh540)"/><rect x="397.37" y="77.19" width="14.2" height="154.81" fill="url(#gG540)"/><rect x="411.57" y="165.58" width="14.2" height="66.42" fill="url(#gN540)"/><rect x="425.77" y="165.58" width="14.2" height="66.42" fill="url(#gB540)"/><rect x="439.97" y="201.35" width="14.2" height="30.65" fill="url(#gY540)"/><text x="425.77" y="246" font-size="11.1" text-anchor="middle" fill="#383850">BY 2011 BY</text><text x="422.77" y="256.5" font-size="11.1" text-anchor="middle" fill="#383850">2011 M3</text><text x="423.77" y="267.5" font-size="11.1" text-anchor="middle" fill="#383850">Dry Grocery</text><rect x="475.35" y="83.39" width="14.2" height="148.61" fill="#7a7a98" opacity="0.7" filter="url(#sh540)"/><rect x="489.55" y="180.86" width="14.2" height="51.14" fill="#7a7a98" opacity="0.7" filter="url(#sh540)"/><rect x="503.75" y="180.86" width="14.2" height="51.14" fill="#7a7a98" opacity="0.7" filter="url(#sh540)"/><rect x="517.95" y="205.39" width="14.2" height="26.61" fill="#7a7a98" opacity="0.7" filter="url(#sh540)"/><rect x="472.35" y="81.39" width="14.2" height="150.61" fill="url(#gG540)"/><rect x="486.55" y="178.86" width="14.2" height="53.14" fill="url(#gN540)"/><rect x="500.75" y="178.86" width="14.2" height="53.14" fill="url(#gB540)"/><rect x="514.95" y="203.39" width="14.2" height="28.61" fill="url(#gY540)"/><text x="500.75" y="246" font-size="11.1" text-anchor="middle" fill="#383850">BY 2011 BY</text><text x="497.75" y="256.5" font-size="11.1" text-anchor="middle" fill="#383850">2011 M3</text><text x="498.75" y="267.5" font-size="11.1" text-anchor="middle" fill="#383850">Dry Grocery</text><rect x="88.3" y="231.5" width="421.70000000000005" height="1.2" fill="#8d8db0"/></svg>
</body></html>
